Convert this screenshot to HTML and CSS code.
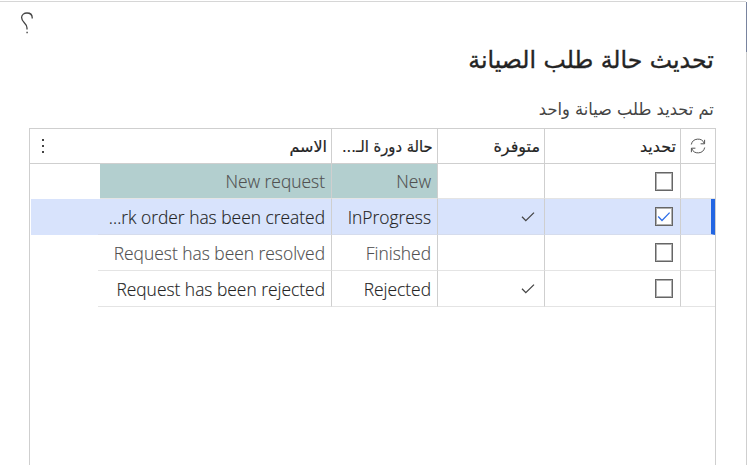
FILE: index.html
```html
<!DOCTYPE html>
<html lang="ar" dir="rtl">
<head>
<meta charset="utf-8">
<title>تحديث حالة طلب الصيانة</title>
<link rel="stylesheet" href="styles.css">
</head>
<body>
<main class="dialog">
  <header class="topbar">
    <svg class="help" viewBox="0 0 14 24" width="14" height="24"><path d="M12.2 8.6V7.6C12.2 4.6 9.8 3 7 3S1.6 4.8 1.6 7.6C1.6 12.6 7 13 7 18V19.5"/><path d="M6.4 22.5H7.8"/></svg>
  </header>
  <h1 class="title"><span class="t t-title">تحديث حالة طلب الصيانة</span></h1>
  <p class="subtitle"><span class="t t-sub">تم تحديد طلب صيانة واحد</span></p>
  <section class="grid">
    <div class="row head">
      <div class="cell icon"><svg width="16" height="16" viewBox="0 0 16 16"><path d="M1.3 6.5A6.8 6.8 0 0 1 14.3 5.5M14.6 1.8V5.8H10.6M14.7 9.5A6.8 6.8 0 0 1 1.7 10.5M1.4 14.2V10.2H5.4"/></svg></div>
      <div class="cell"><span class="t t-head">تحديد</span></div>
      <div class="cell"><span class="t t-head">متوفرة</span></div>
      <div class="cell"><span class="t t-head t-state">حالة دورة الـ...</span></div>
      <div class="cell name"><span class="t t-head">الاسم</span></div>
      <div class="cell more"><i></i><i></i><i></i></div>
    </div>
    <div class="row locked muted">
      <div class="cell"></div><div class="cell"><span class="box"></span></div><div class="cell"></div>
      <div class="cell fill"><span dir="ltr">New</span></div><div class="cell name fill"><span dir="ltr">New request</span></div><div class="cell end"></div>
    </div>
    <div class="row selected">
      <div class="cell"></div><div class="cell"><span class="box"><svg class="tick" width="14" height="12" viewBox="0 0 14 12"><path d="M1.2 5.5L5 9.5L12.6 1.6"/></svg></span></div><div class="cell check"><svg class="tick" width="14" height="12" viewBox="0 0 14 12"><path d="M1 5.8L4.8 9.6L13 1.6"/></svg></div>
      <div class="cell"><span dir="ltr">InProgress</span></div><div class="cell name"><span dir="ltr">...rk order has been created</span></div><div class="cell end"></div>
    </div>
    <div class="row muted">
      <div class="cell"></div><div class="cell"><span class="box"></span></div><div class="cell"></div>
      <div class="cell"><span dir="ltr">Finished</span></div><div class="cell name"><span dir="ltr">Request has been resolved</span></div><div class="cell end"></div>
    </div>
    <div class="row">
      <div class="cell"></div><div class="cell"><span class="box"></span></div><div class="cell check"><svg class="tick" width="14" height="12" viewBox="0 0 14 12"><path d="M1 5.8L4.8 9.6L13 1.6"/></svg></div>
      <div class="cell"><span dir="ltr">Rejected</span></div><div class="cell name"><span dir="ltr">Request has been rejected</span></div><div class="cell end"></div>
    </div>
  </section>
</main>
<aside class="edge"><i class="edge-top"></i><i class="edge-rest"></i></aside>
</body>
</html>
```
FILE: styles.css
```css
* { box-sizing: border-box; }
body {
  margin: 0;
  width: 747px;
  height: 465px;
  overflow: hidden;
  display: flex;
  flex-direction: row-reverse;
  background: #fff;
  color: #242424;
  font-family: "Open Sans", "Noto Sans", sans-serif;
}
.dialog {
  width: 746px;
  height: 465px;
  padding: 1px 30px 0 29px;
  background: linear-gradient(#d6d6d6, #d6d6d6) 0 1px / 100% 1px no-repeat;
  display: flex;
  flex-direction: column;
}
.edge { width: 1px; padding-top: 2px; display: flex; flex-direction: column; }
.edge-top { height: 50px; background: #79849f; }
.edge-rest { flex: 1; background: #cfcfcf; }
.topbar { height: 41px; padding-top: 9px; display: flex; justify-content: flex-end; }
.help { margin-left: -9px; fill: none; stroke: #444; stroke-width: 1.3; }
.title, .subtitle { margin: 0; font-weight: 400; white-space: nowrap; padding-right: 2px; font-family: "DejaVu Sans", sans-serif; }
.title { height: 49px; line-height: 36px; font-size: 24px; }
.subtitle { height: 37px; line-height: 36px; font-size: 17px; color: #444; }
.t { display: inline-block; transform-origin: right center; }
.t-title { transform: scaleX(0.983); -webkit-text-stroke: 0.35px; }
.t-sub { transform: scaleX(0.957); }
.t-head { font-family: "DejaVu Sans", sans-serif; font-size: 16px; -webkit-text-stroke: 0.2px; }
.t-state { transform: scaleX(0.92); }
.grid { flex: 1; border: 1px solid #cfcfcf; border-bottom: 0; }
.row {
  display: grid;
  grid-template-columns: 35px 136px 107px 106px 233px 68px;
  height: 36px;
  font-size: 17.4px;
  font-weight: 300;
  -webkit-text-stroke: 0.15px;
}
.head { height: 35px; border-bottom: 1px solid #cfcfcf; font-weight: 400; }
.cell {
  display: flex;
  align-items: center;
  min-width: 0;
  border-left: 1px solid #cfcfcf;
  border-bottom: 1px solid #e4e4e4;
  padding-right: 6px;
  white-space: nowrap;
}
.head .cell { border-bottom: 0; padding-right: 4px; }
.cell.name, .cell.more, .cell.end { border-left: 0; }
.cell.end { border-bottom: 0; }
.head .icon { justify-content: center; padding: 0; }
.icon svg { fill: none; stroke: #555; stroke-width: 1; }
.head .more { flex-direction: column; justify-content: center; align-items: flex-end; gap: 4px; padding: 0 0 0 12px; }
.more i { width: 2px; height: 2px; background: #444; }
.muted { color: #505050; }
.locked { height: 35px; }
.fill { background: #b3cfcf; }
.name.fill { margin-left: 2px; }
.selected { background: #d8e3fc; margin-left: 1px; }
.selected .cell { border-bottom-color: #d5dced; }
.selected .cell:first-child { border-right: 4px solid #2266e3; }
.box {
  width: 18px;
  height: 19px;
  margin-right: 1px;
  border: 1px solid #666;
  box-shadow: inset 0 0 0 1px #b0b0b0;
  background: #fff;
  display: flex;
  align-items: center;
  justify-content: center;
}
.tick { fill: none; stroke: #444; stroke-width: 1.3; }
.box .tick { stroke: #2f6fe8; }
.check { padding-right: 9px; }
```
